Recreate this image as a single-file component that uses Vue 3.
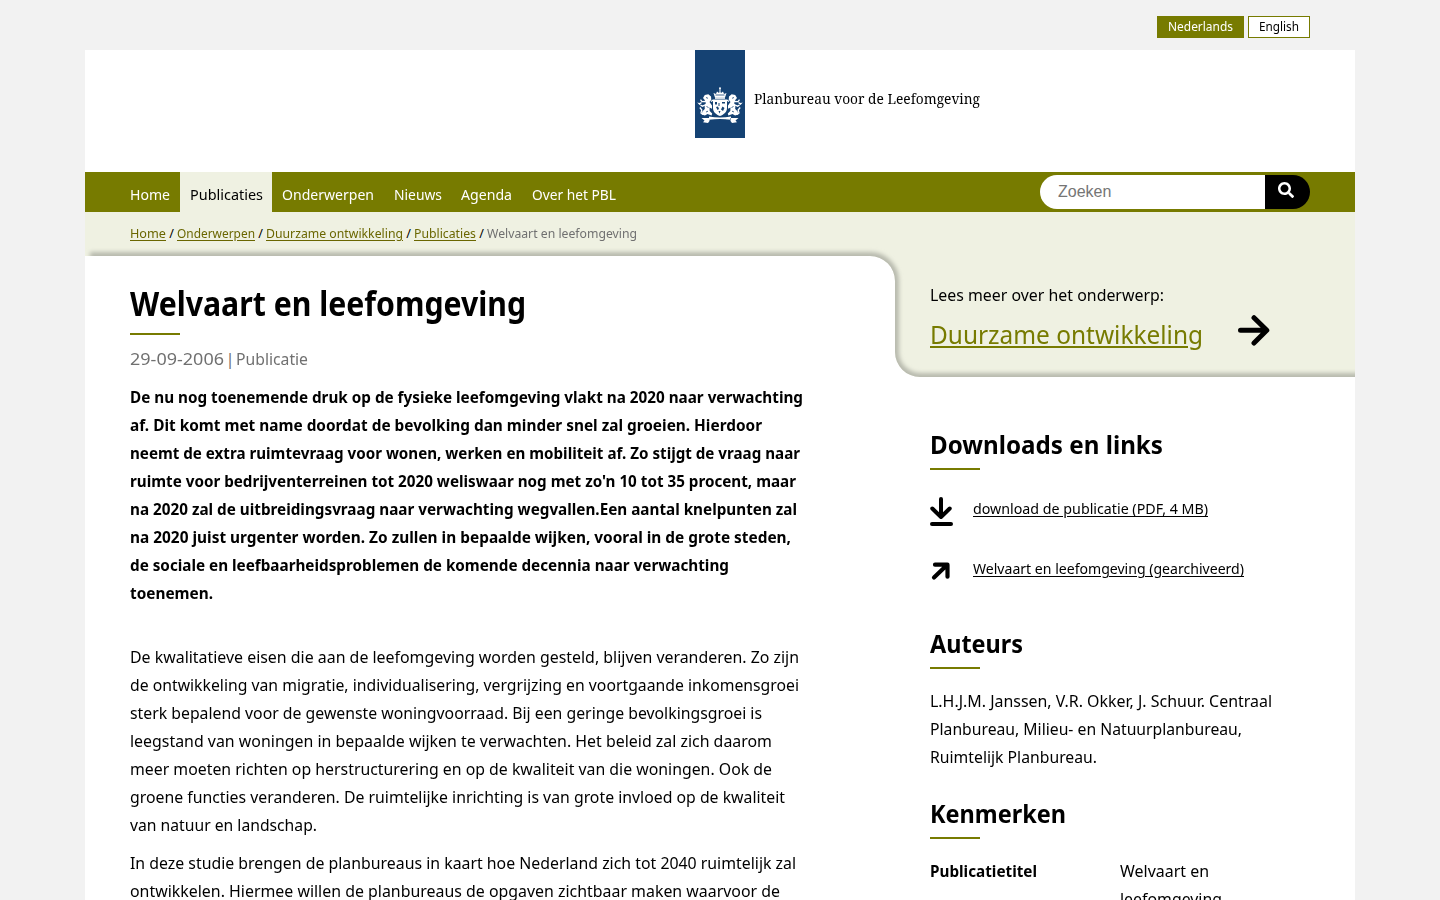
<script setup>
const fit = (el, { value }) => {
  const natural = el.getBoundingClientRect().width
  el.style.transform = `scaleX(${value / natural})`
  el.style.marginRight = `${value - natural}px`
}
const vFit = { mounted: fit }

const menu = [
  { label: 'Home', w: 40 },
  { label: 'Publicaties', w: 73, active: true },
  { label: 'Onderwerpen', w: 92 },
  { label: 'Nieuws', w: 48 },
  { label: 'Agenda', w: 51 },
  { label: 'Over het PBL', w: 84 },
]
const crumbs = [
  { label: 'Home', w: 36 },
  { label: 'Onderwerpen', w: 78 },
  { label: 'Duurzame ontwikkeling', w: 137 },
  { label: 'Publicaties', w: 62 },
]
const intro = [
  ['De nu nog toenemende druk op de fysieke leefomgeving vlakt na 2020 naar verwachting', 673],
  ['af. Dit komt met name doordat de bevolking dan minder snel zal groeien. Hierdoor', 632],
  ['neemt de extra ruimtevraag voor wonen, werken en mobiliteit af. Zo stijgt de vraag naar', 670],
  ["ruimte voor bedrijventerreinen tot 2020 weliswaar nog met zo'n 10 tot 35 procent, maar", 666],
  ['na 2020 zal de uitbreidingsvraag naar verwachting wegvallen.Een aantal knelpunten zal', 667],
  ['na 2020 juist urgenter worden. Zo zullen in bepaalde wijken, vooral in de grote steden,', 661],
  ['de sociale en leefbaarheidsproblemen de komende decennia naar verwachting', 599],
  ['toenemen.', 83],
]
const body = [
  ['De kwalitatieve eisen die aan de leefomgeving worden gesteld, blijven veranderen. Zo zijn', 669],
  ['de ontwikkeling van migratie, individualisering, vergrijzing en voortgaande inkomensgroei', 669],
  ['sterk bepalend voor de gewenste woningvoorraad. Bij een geringe bevolkingsgroei is', 632],
  ['leegstand van woningen in bepaalde wijken te verwachten. Het beleid zal zich daarom', 642],
  ['meer moeten richten op herstructurering en op de kwaliteit van die woningen. Ook de', 642],
  ['groene functies veranderen. De ruimtelijke inrichting is van grote invloed op de kwaliteit', 655],
  ['van natuur en landschap.', 187],
]
const study = [
  ['In deze studie brengen de planbureaus in kaart hoe Nederland zich tot 2040 ruimtelijk zal', 666],
  ['ontwikkelen. Hiermee willen de planbureaus de opgaven zichtbaar maken waarvoor de', 650],
]
const authors = [
  ['L.H.J.M. Janssen, V.R. Okker, J. Schuur. Centraal', 342],
  ['Planbureau, Milieu- en Natuurplanbureau,', 312],
  ['Ruimtelijk Planbureau.', 167],
]
const lions = ['', 'translate(44 0) scale(-1 1)']
</script>

<template>
  <div class="page">
    <div class="languages">
      <span class="lang current"><span v-fit="65" class="t">Nederlands</span></span>
      <a class="lang"><span v-fit="40" class="t">English</span></a>
    </div>

    <div class="sheet">
      <header class="brand">
        <div class="ribbon">
          <svg class="arms" viewBox="0 0 44 38" width="44" height="38">
            <g fill="#fff">
              <circle cx="22" cy="2.300" r="1" />
              <path d="M21.500 3h1v3h-1zM15.500 7l2.500 1 1-2.500 2 1.500 1-2 1 2 2-1.500 1 2.500 2.500-1-1.500 4.500h-10z" />
              <path d="M17 11.300h10v1.500H17z" />
              <path fill-rule="evenodd" d="M15 13.500h14v8.500c0 4-3 6.500-7 8-4-1.500-7-4-7-8zM17 16v2.500h2V16zm3.500 1v3h1v-3zm3.500-1v1.500h3V16zm-6 5l1.500 3 1.500-1-1-2.500zm6.500-.500l-1.500 3 2 1.500 1.500-3zm-4 4.500l1 2.500 1-2.500z" />
              <g v-for="side in lions" :key="side" :transform="side">
                <path d="M5 12l1.800-3 3.500-.8 2.700 2.300.3 3.300-1.800 2.200 2.500 3.500v3.300l-2.500-1.300.2 3.500 2.500 2.500-.6 2-4.100-1.500-2.600 1.500-3.100-1 .5-3 2.500-2.500-.2-3.500 1.300-2.500-1.200-3z" />
                <path d="M8 15.500l-4 .2-1.500-2M8 18.500l-3.500 1.700-2-1M5 28.500l-2-1.500.8-3-2-2.500M13 15.500l2.200-1.500" fill="none" stroke="#fff" stroke-width="1.300" />
                <path d="M-.8 16.500l2 .5 2.300-1v1.500L1.500 19z" />
              </g>
              <path d="M11 30.500q11 2 22 0v3.200q-11-1.500-22 0zM3.500 32h8v3l-1.500 2-5-.8 1.500-1.800zM40.500 32h-8v3l1.500 2 5-.8-1.500-1.800z" />
            </g>
            <path d="M17.500 9h9M8 11.500l2 .8M36 11.500l-2 .8M8.500 20.500l2 1M35.500 20.500l-2 1M8 26l2-.8M36 26l-2-.8" stroke="#154273" fill="none" stroke-width=".8" />
          </svg>
        </div>
        <span v-fit="226" class="t brandname">Planbureau voor de Leefomgeving</span>
      </header>

      <nav class="menu">
        <a v-for="m in menu" :key="m.label" class="item" :class="{ active: m.active }"><span v-fit="m.w" class="t">{{ m.label }}</span></a>
        <div class="search">
          <input type="text" placeholder="Zoeken" />
          <button type="button" aria-label="Zoeken">
            <svg viewBox="0 0 512 512" width="16" height="16"><path fill="#fff" d="M505 442.700L405.300 343c-4.500-4.500-10.600-7-17-7H372c27.600-35.300 44-79.700 44-128C416 93.100 322.900 0 208 0S0 93.100 0 208s93.100 208 208 208c48.300 0 92.700-16.400 128-44v16.300c0 6.400 2.500 12.500 7 17l99.700 99.700c9.400 9.400 24.600 9.400 33.900 0l28.300-28.300c9.400-9.400 9.400-24.600.1-34zM208 336c-70.700 0-128-57.200-128-128 0-70.700 57.200-128 128-128 70.700 0 128 57.200 128 128 0 70.700-57.200 128-128 128z" /></svg>
          </button>
        </div>
      </nav>

      <div class="lower">
        <svg class="panel" viewBox="0 0 1270 165" width="1270" height="165">
          <defs>
            <clipPath id="panel-area"><path d="M0 0H1270V165H835A25 25 0 0 1 810 140V69A25 25 0 0 0 785 44H0Z" /></clipPath>
            <filter id="panel-blur" x="-20" y="-20" width="1320" height="210" filterUnits="userSpaceOnUse"><feGaussianBlur stdDeviation="2.200" /></filter>
          </defs>
          <g clip-path="url(#panel-area)">
            <rect width="1270" height="165" fill="#eff1e2" />
            <path d="M5 44H785A25 25 0 0 1 810 69V140A25 25 0 0 0 835 165H1290" fill="none" stroke="#b8baae" stroke-width="8" filter="url(#panel-blur)" />
          </g>
        </svg>

        <div class="crumbs">
          <template v-for="c in crumbs" :key="c.label">
            <a v-fit="c.w" class="t">{{ c.label }}</a><span class="slash">/</span>
          </template>
          <span v-fit="150" class="t here">Welvaart en leefomgeving</span>
        </div>

        <div class="columns">
          <main class="article">
            <h1><span v-fit="396" class="t">Welvaart en leefomgeving</span></h1>
            <p class="meta"><span v-fit="94" class="t">29-09-2006</span><span class="bar">|</span><span v-fit="72" class="t">Publicatie</span></p>
            <p class="intro"><span v-for="[s, w] in intro" :key="s" class="line"><span v-fit="w" class="t">{{ s }}</span></span></p>
            <p class="text"><span v-for="[s, w] in body" :key="s" class="line"><span v-fit="w" class="t">{{ s }}</span></span></p>
            <p class="text"><span v-for="[s, w] in study" :key="s" class="line"><span v-fit="w" class="t">{{ s }}</span></span></p>
          </main>

          <aside>
            <section class="topic">
              <div class="topicbody">
                <p><span v-fit="234" class="t">Lees meer over het onderwerp:</span></p>
                <a class="topiclink"><span v-fit="273" class="t">Duurzame ontwikkeling</span></a>
              </div>
              <svg class="go" viewBox="0 0 32 32" width="32" height="32"><path d="M2.500 16.300H28M16 3.700l12.800 12.600L16 29" fill="none" stroke="#000" stroke-width="5" stroke-linecap="round" stroke-linejoin="round" /></svg>
            </section>

            <div class="side">
              <h2><span v-fit="233" class="t">Downloads en links</span></h2>
              <ul class="downloads">
                <li>
                  <svg viewBox="0 0 24 32" width="24" height="32"><path d="M11 4v18M2.300 13.500L11 22l8.700-8.500" fill="none" stroke="#000" stroke-width="4" stroke-linecap="round" stroke-linejoin="round" /><path d="M2 29h19" stroke="#000" stroke-width="4" stroke-linecap="round" /></svg>
                  <a v-fit="235" class="t">download de publicatie (PDF, 4 MB)</a>
                </li>
                <li>
                  <svg viewBox="0 0 24 32" width="24" height="32"><path d="M4 22.500L16.500 10.500M5 9.700h12.500v12" fill="none" stroke="#000" stroke-width="4.200" stroke-linecap="round" stroke-linejoin="round" /></svg>
                  <a v-fit="271" class="t">Welvaart en leefomgeving (gearchiveerd)</a>
                </li>
              </ul>
              <h2><span v-fit="93" class="t">Auteurs</span></h2>
              <p class="authors"><span v-for="[s, w] in authors" :key="s" class="line"><span v-fit="w" class="t">{{ s }}</span></span></p>
              <h2><span v-fit="136" class="t">Kenmerken</span></h2>
              <dl class="facts">
                <dt><span v-fit="107" class="t">Publicatietitel</span></dt>
                <dd>
                  <span class="line"><span v-fit="89" class="t">Welvaart en</span></span>
                  <span class="line"><span v-fit="102" class="t">leefomgeving</span></span>
                </dd>
              </dl>
            </div>
          </aside>
        </div>
      </div>
    </div>
  </div>
</template>

<style>
html,
body {
  margin: 0;
  height: 900px;
  overflow: hidden;
  background: #f2f2f2;
}
</style>

<style scoped>
.page {
  width: 1270px;
  height: 900px;
  margin: 0 auto;
  overflow: hidden;
  color: #000;
  font: 17px/28px "Noto Sans", "Open Sans", sans-serif;
}
.page * { box-sizing: border-box; }
p, h1, h2, ul, dl, dd { margin: 0; padding: 0; }
.t {
  display: inline-block;
  white-space: nowrap;
  transform-origin: 0 50%;
}
.line { display: block; height: 28px; }
.languages {
  display: flex;
  justify-content: flex-end;
  gap: 4px;
  height: 50px;
  padding: 16px 45px 0 0;
  font-size: 12px;
  line-height: 20px;
}
.lang {
  height: 22px;
  padding: 0 10px;
  border: 1px solid #777b00;
  background: #fff;
}
.current { background: #777b00; color: #fff; }
.sheet { height: 850px; background: #fff; }
.brand { display: flex; height: 122px; padding-left: 610px; }
.ribbon {
  width: 50px;
  height: 88px;
  padding: 36px 3px 0;
  margin-right: 9px;
  background: #154273;
}
.arms { display: block; overflow: visible; }
.brandname {
  height: 28px;
  margin-top: 34px;
  font: 14.500px/28px "Noto Serif", "Liberation Serif", serif;
}
.menu {
  display: flex;
  height: 40px;
  padding: 0 45px 0 35px;
  background: #777b00;
  color: #fff;
  font-size: 14.500px;
  line-height: 44px;
}
.item { padding: 0 10px; height: 40px; }
.item.active { padding-right: 9px; background: #eff1e2; color: #000; }
.item:nth-child(4) { padding-right: 9px; }
.search {
  display: flex;
  width: 270px;
  height: 34px;
  margin: 3px 0 0 auto;
  border-radius: 17px;
  overflow: hidden;
}
.search input {
  width: 225px;
  padding: 0 18px;
  border: 0;
  background: #fff;
  font: 16px "Liberation Sans", Arial, sans-serif;
}
.search input::placeholder { color: #757575; }
.search button {
  width: 45px;
  padding: 0 4px 4px 0;
  border: 0;
  background: #000;
}
.search svg { display: block; margin: 0 auto; }
.lower { position: relative; }
.lower > * { position: relative; }
.lower > .panel { position: absolute; top: 0; left: 0; }
.crumbs {
  display: flex;
  height: 44px;
  padding-left: 45px;
  font-size: 12.500px;
  line-height: 43px;
}
.crumbs a { color: #6a6600; text-decoration: underline; text-underline-offset: 2px; }
.slash { width: 11px; text-align: center; }
.here { color: #707070; }
.columns { display: grid; grid-template-columns: 810px 460px; }
.article { padding: 26px 0 0 45px; }
h1 { height: 53px; font-size: 34px; line-height: 42px; font-weight: 700; }
h1::after, h2::after {
  content: "";
  display: block;
  width: 50px;
  height: 2px;
  background: #777b00;
}
h1::after { margin-top: 9px; }
.meta { display: flex; margin-top: 10px; color: #707070; font-size: 16.500px; }
.bar { width: 12px; text-align: center; }
.intro { margin-top: 10px; font-size: 16.500px; font-weight: 700; }
.text { margin-top: 36px; }
.text + .text { margin-top: 10px; }
.topic { display: flex; height: 121px; padding: 25px 0 0 35px; }
.topiclink { display: block; margin-top: 6px; line-height: 38px; font-size: 26px; color: #777b00; }
.topiclink .t {
  text-decoration: underline;
  text-decoration-thickness: 2px;
  text-underline-offset: 2px;
}
.go { margin: 33px 0 0 35px; }
.side { padding: 50px 0 0 35px; }
h2 { height: 43px; font-size: 25px; line-height: 34px; font-weight: 700; }
h2::after { margin-top: 7px; }
.downloads { list-style: none; margin-top: 25px; height: 131px; }
.downloads li { display: flex; height: 60px; font-size: 14.500px; line-height: 26px; }
.downloads svg { width: 24px; margin-right: 19px; }
.downloads a { text-decoration: underline; text-underline-offset: 2px; }
.authors { margin-top: 18px; height: 109px; }
.facts { display: grid; grid-template-columns: 190px 1fr; margin-top: 18px; }
dt { font-size: 16.500px; font-weight: 700; }
</style>
